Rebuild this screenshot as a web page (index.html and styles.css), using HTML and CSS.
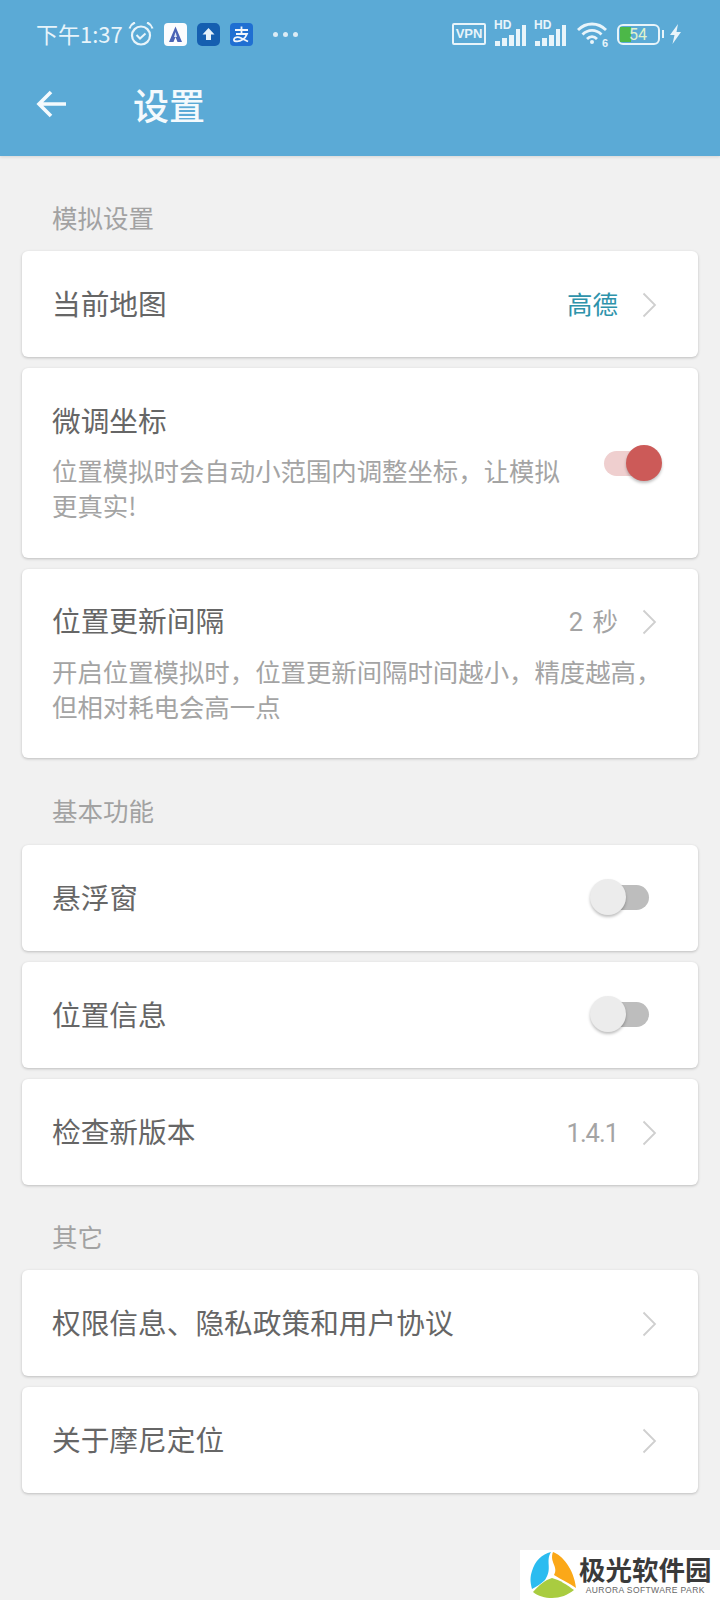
FILE: index.html
```html
<!DOCTYPE html>
<html lang="zh-CN">
<head>
    <meta charset="UTF-8">
    <meta name="viewport" content="width=device-width, initial-scale=1.0">
    <title>设置</title>
    <link rel="stylesheet" href="styles.css">
</head>
<body>
    <header class="app-header">
        <div class="status-bar">
            <div class="status-left">
                <span class="clock">下午1:37</span>
                <svg class="alarm" width="26" height="24" viewBox="0 0 26 24" fill="none" stroke="#e8f4fa" stroke-width="2.2">
                    <circle cx="13" cy="13.5" r="9"/>
                    <path d="M8.500 13l3.500 3.500 5.500-5" stroke-width="2"/>
                    <path d="M1.500 6.500C2.500 3.500 4.500 1.500 7 .5M24.500 6.500C23.500 3.500 21.500 1.500 19 .5"/>
                </svg>
                <svg class="app-icon" width="23" height="23" viewBox="0 0 23 23">
                    <rect width="23" height="23" rx="4" fill="#fbfcfe"/>
                    <path d="M11.500 3.500L18 19h-4.500l-2-5-2 5H5z" fill="#4a63b5"/>
                    <path d="M11.500 9l1.500 5h-3z" fill="#dfe8f6"/>
                </svg>
                <svg class="app-icon" width="23" height="23" viewBox="0 0 23 23">
                    <rect width="23" height="23" rx="5" fill="#155fb0"/>
                    <path d="M11.500 5l6 6.500h-3.500V17H9v-5.500H5.500z" fill="#e6f2fb"/>
                </svg>
                <svg class="app-icon" width="23" height="23" viewBox="0 0 23 23" fill="none" stroke="#f2f7fc" stroke-width="1.800">
                    <rect width="23" height="23" rx="4" fill="#1f6fd2" stroke="none"/>
                    <path d="M5 7h13M11.500 3.500V11M6 11h11C15.500 15 11 19.500 4.500 18 2.500 16 6 12.500 11 15l7 3.500"/>
                </svg>
                <span class="more-dots">
                    <i></i><i></i><i></i>
                </span>
            </div>
            <div class="status-right">
                <span class="vpn">VPN</span>
                <span class="signal">
                    <b>HD</b>
                    <svg width="33" height="22" viewBox="0 0 33 22" fill="#e8f4fa">
                        <rect x="1" y="17" width="5" height="5"/>
                        <rect x="8" y="14" width="5" height="8"/>
                        <rect x="15" y="11" width="5" height="11"/>
                        <rect x="22" y="5" width="4" height="17"/>
                        <rect x="28" y="1" width="4" height="21"/>
                    </svg>
                </span>
                <span class="signal">
                    <b>HD</b>
                    <svg width="33" height="22" viewBox="0 0 33 22" fill="#e8f4fa">
                        <rect x="1" y="17" width="5" height="5"/>
                        <rect x="8" y="14" width="5" height="8"/>
                        <rect x="15" y="11" width="5" height="11"/>
                        <rect x="22" y="5" width="4" height="17"/>
                        <rect x="28" y="1" width="4" height="21"/>
                    </svg>
                </span>
                <span class="wifi">
                    <svg width="32" height="22" viewBox="0 0 32 22" fill="none" stroke="#e8f4fa" stroke-width="2.800">
                        <path d="M2 8C10 0 22 0 30 8M6.500 12.500C12 7 20 7 25.500 12.500M11 17c3-3 7-3 10 0"/>
                        <circle cx="16" cy="20" r="2" fill="#e8f4fa" stroke="none"/>
                    </svg>
                    <em>6</em>
                </span>
                <span class="battery">
                    <span class="battery-fill"></span>
                    <span class="battery-text">54</span>
                </span>
                <span class="battery-cap"></span>
                <svg class="bolt" width="13" height="20" viewBox="0 0 13 20">
                    <path d="M9 0L1 11h4.500L3.500 20 12 8H7.500z" fill="#e8f4fa"/>
                </svg>
            </div>
        </div>
        <div class="toolbar">
            <svg class="back" width="32" height="30" viewBox="0 0 32 30" fill="none" stroke="#f4fafd" stroke-width="3.600">
                <path d="M30 15H4M15 3L3 15l12 12"/>
            </svg>
            <h1>设置</h1>
        </div>
    </header>

    <main class="settings">
        <div class="section-label section-first">模拟设置</div>

        <div class="card">
            <div class="card-main"><div class="card-title">当前地图</div></div>
            <span class="value value-accent">高德</span>
            <svg class="chevron" width="15" height="26" viewBox="0 0 15 26" fill="none" stroke="#cfcfcf" stroke-width="1.800"><path d="M1.500 1.500L13 13 1.500 24.500"/></svg>
        </div>

        <div class="card card-tall">
            <div class="card-main">
                <div class="card-title">微调坐标</div>
                <div class="card-desc">位置模拟时会自动小范围内调整坐标，让模拟<br>更真实!</div>
            </div>
            <span class="switch switch-on"><span class="knob"></span></span>
        </div>

        <div class="card card-tall card-tall-top">
            <div class="card-main">
                <div class="card-head">
                    <div class="card-title">位置更新间隔</div>
                    <span class="value value-spaced">2 秒</span>
                    <svg class="chevron" width="15" height="26" viewBox="0 0 15 26" fill="none" stroke="#cfcfcf" stroke-width="1.800"><path d="M1.500 1.500L13 13 1.500 24.500"/></svg>
                </div>
                <div class="card-desc">开启位置模拟时，位置更新间隔时间越小，精度越高，<br>但相对耗电会高一点</div>
            </div>
        </div>

        <div class="section-label">基本功能</div>

        <div class="card">
            <div class="card-main"><div class="card-title">悬浮窗</div></div>
            <span class="switch"><span class="knob"></span></span>
        </div>

        <div class="card">
            <div class="card-main"><div class="card-title">位置信息</div></div>
            <span class="switch"><span class="knob"></span></span>
        </div>

        <div class="card">
            <div class="card-main"><div class="card-title">检查新版本</div></div>
            <span class="value value-version">1.4.1</span>
            <svg class="chevron" width="15" height="26" viewBox="0 0 15 26" fill="none" stroke="#cfcfcf" stroke-width="1.800"><path d="M1.500 1.500L13 13 1.500 24.500"/></svg>
        </div>

        <div class="section-label section-last">其它</div>

        <div class="card">
            <div class="card-main"><div class="card-title">权限信息、隐私政策和用户协议</div></div>
            <svg class="chevron" width="15" height="26" viewBox="0 0 15 26" fill="none" stroke="#cfcfcf" stroke-width="1.800"><path d="M1.500 1.500L13 13 1.500 24.500"/></svg>
        </div>

        <div class="card">
            <div class="card-main"><div class="card-title">关于摩尼定位</div></div>
            <svg class="chevron" width="15" height="26" viewBox="0 0 15 26" fill="none" stroke="#cfcfcf" stroke-width="1.800"><path d="M1.500 1.500L13 13 1.500 24.500"/></svg>
        </div>
    </main>

    <div class="watermark">
        <svg width="46" height="46" viewBox="0 0 46 46">
            <path d="M21 0C15 10 23 16 15 28 11 32 6 35 2 37 0 30 0 25 2 19 5 9 12 2 21 0z" fill="#2bbcf0"/>
            <path d="M23 0C32 3 44 17 46 36 39 31 32 28 24 23 29 15 19 10 23 0z" fill="#fba818"/>
            <path d="M3 40C9 33 15 28 22 26 30 28 37 33 44 38 38 43 30 46 22 46 15 46 8 44 3 40z" fill="#a9cc40"/>
        </svg>
        <div class="watermark-text">
            <div class="watermark-name">极光软件园</div>
            <div class="watermark-en">AURORA SOFTWARE PARK</div>
        </div>
    </div>
</body>
</html>
```

FILE: styles.css
```css
* {
    box-sizing: border-box;
}

body {
    margin: 0;
    width: 720px;
    height: 1600px;
    position: relative;
    overflow: hidden;
    background-color: #f1f1f1;
    font-family: "Noto Sans CJK SC", "Noto Sans", sans-serif;
    color: #666;
}

.app-header {
    height: 156px;
    background-color: #5baad6;
    box-shadow: 0 1px 3px rgba(0, 0, 0, 0.12);
}

.status-bar {
    height: 68px;
    display: flex;
    justify-content: space-between;
    align-items: center;
    padding: 0 38px 0 36px;
    color: #e8f4fa;
}

.status-left,
.status-right {
    display: flex;
    align-items: center;
}

.clock {
    font-size: 22px;
    line-height: 30px;
    width: 92px;
    margin-top: -2px;
    white-space: nowrap;
    font-family: "Noto Sans CJK SC", Roboto, sans-serif;
}

.alarm {
    margin-right: 10px;
}

.app-icon {
    margin-right: 10px;
}

.more-dots {
    display: flex;
    gap: 5px;
    margin-left: 10px;
}

.more-dots i {
    width: 5px;
    height: 5px;
    border-radius: 50%;
    background-color: #dcecf5;
}

.vpn {
    width: 34px;
    height: 22px;
    border: 2px solid #e8f4fa;
    border-radius: 2px;
    font: bold 13px/18px "Liberation Sans", sans-serif;
    text-align: center;
    margin-right: 8px;
}

.signal {
    position: relative;
    width: 33px;
    height: 24px;
    display: flex;
    align-items: flex-end;
    margin-right: 7px;
}

.signal b {
    position: absolute;
    top: -3px;
    left: 0;
    font: bold 12px/12px "Liberation Sans", sans-serif;
}

.wifi {
    position: relative;
    width: 32px;
    height: 24px;
    margin: 0 9px 0 2px;
    display: flex;
}

.wifi em {
    position: absolute;
    right: 0;
    bottom: -3px;
    font: bold 11px/12px "Liberation Sans", sans-serif;
}

.battery {
    position: relative;
    width: 43px;
    height: 21px;
    border: 2px solid #e8f4fa;
    border-radius: 6px;
    overflow: hidden;
}

.battery-fill {
    position: absolute;
    left: 1px;
    top: 1px;
    bottom: 1px;
    width: 11px;
    background-color: #4cb848;
}

.battery-text {
    position: absolute;
    left: 10px;
    top: 0;
    font: 16px/17px Roboto, sans-serif;
    color: #dff2cc;
}

.battery-cap {
    width: 2px;
    height: 8px;
    margin: 0 5px 0 2px;
    background-color: #e8f4fa;
}

.toolbar {
    height: 72px;
    display: flex;
    align-items: center;
    padding: 0 0 0 36px;
}

.back {
    margin-right: 65px;
}

.toolbar h1 {
    margin: 0;
    font-size: 36px;
    line-height: 50px;
    font-weight: 500;
    color: #f4fafd;
}

.settings {
    padding: 0 22px;
}

.section-label {
    height: 40px;
    margin: 32px 0 15px 30px;
    font-size: 25.500px;
    line-height: 40px;
    color: #a2a2a2;
}

.section-first {
    margin-top: 41px;
    margin-bottom: 14px;
}

.section-last {
    margin-top: 31px;
    margin-bottom: 14px;
}

.card {
    height: 106px;
    margin-bottom: 11px;
    padding: 0 41px 2px 30px;
    display: flex;
    align-items: center;
    background-color: #fff;
    border-radius: 6px;
    box-shadow: 0 1px 3px rgba(0, 0, 0, 0.22);
}

.card-tall {
    height: 190px;
    padding-right: 38px;
    padding-bottom: 4px;
}

.card-tall-top {
    height: 189px;
    padding-right: 41px;
}

.card-main {
    flex: 1;
    min-width: 0;
}

.card-head {
    display: flex;
    align-items: center;
}

.card-head .card-title {
    flex: 1;
}

.card-title {
    font-size: 28.700px;
    line-height: 42px;
    color: #666;
}

.card-desc {
    margin-top: 12px;
    font-size: 25.400px;
    line-height: 35px;
    color: #a4a4a4;
    white-space: nowrap;
}

.card-tall-top .card-desc {
    margin-top: 13px;
}

.value {
    margin-top: 4px;
    margin-right: 24px;
    font-family: Roboto, "Noto Sans CJK SC", sans-serif;
    font-size: 25.500px;
    line-height: 36px;
    color: #a4a4a4;
}

.value-accent {
    color: #2e93ab;
}

.value-spaced {
    word-spacing: 3px;
}

.value-version {
    letter-spacing: -1px;
}

.chevron {
    flex: none;
    margin-top: 3px;
}

.switch {
    position: relative;
    width: 46px;
    height: 25px;
    margin-right: 8px;
    border-radius: 13px;
    background-color: #bdbdbd;
}

.switch .knob {
    position: absolute;
    left: -13px;
    top: -6px;
    width: 36px;
    height: 36px;
    border-radius: 50%;
    background-color: #ececec;
    box-shadow: 0 2px 3px rgba(0, 0, 0, 0.25);
}

.switch-on {
    width: 56px;
    margin-top: 4px;
    margin-right: 0;
    background-color: #efcfcf;
}

.switch-on .knob {
    left: 22px;
    background-color: #cc5a58;
}

.watermark {
    position: absolute;
    right: 0;
    bottom: 0;
    width: 200px;
    height: 50px;
    padding-left: 10px;
    display: flex;
    align-items: center;
    background-color: #fff;
}

.watermark-text {
    margin-left: 3px;
}

.watermark-name {
    font-size: 26.500px;
    line-height: 27px;
    font-weight: 700;
    color: #3a3a3a;
    white-space: nowrap;
}

.watermark-en {
    margin-top: 2px;
    font: 8.500px/12px "Liberation Sans", sans-serif;
    letter-spacing: 0.400px;
    color: #666;
    white-space: nowrap;
    text-align: center;
}
```
